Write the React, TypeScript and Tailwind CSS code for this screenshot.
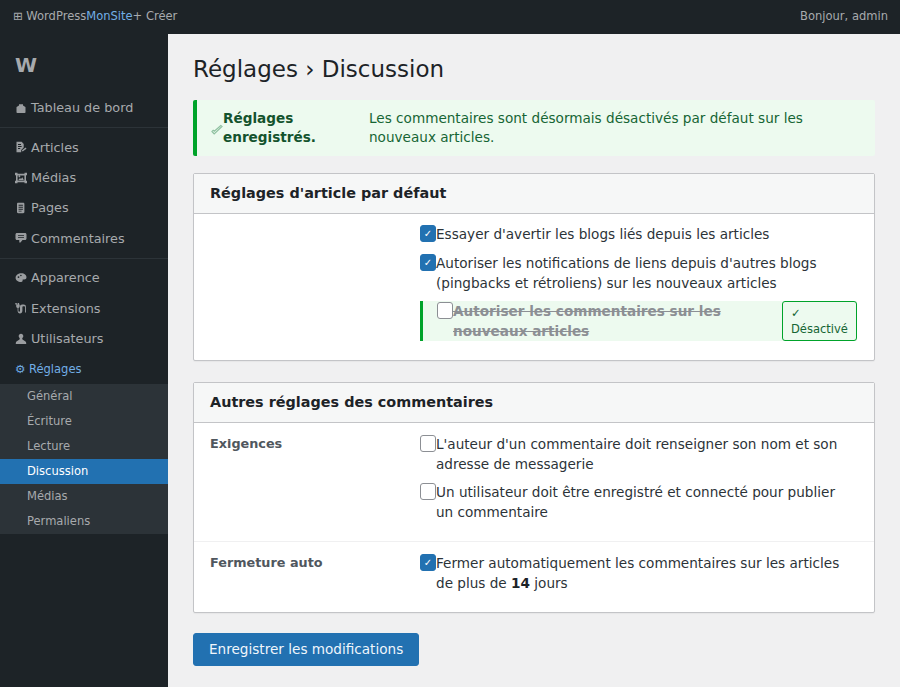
import React from 'react';

const font = { fontFamily: '"DejaVu Sans", sans-serif' };

// small filled glyphs for the side menu, 12x12 grid
const icons: Record<string, React.ReactNode> = {
  home: <path d="M4 2.200h4v1.300l2 1.200c.4.200.5.500.5.900v4.600c0 .5-.3.800-.8.800H2.300c-.5 0-.8-.3-.8-.8V5.600c0-.4.100-.7.500-.9l2-1.200z" />,
  post: (
    <>
      <path fillRule="evenodd" d="M1.500.8h5.200l2 2.200v3.400L6.200 9v2.200H1.500zM3 3v.9h3V3zm0 2v.9h3.600V5zm0 2v.9h2.200V7z" />
      <path d="M7 9.200l3.600-2.600.9 1.100L8 10.300H7z" />
    </>
  ),
  media: (
    <path
      fillRule="evenodd"
      d="M0 .8h2.500v1h7v-1H12v2.500h-1v5.400h1v2.500H9.500v-1h-7v1H0V8.700h1V3.300H0zm2.600 2.600v5.200h6.800V3.400zM3.300 8l1.700-2 1 1 1.300-1.800L8.800 8zM4.400 5.300a.9.9 0 1 0 0-1.800.9.9 0 0 0 0 1.800z"
    />
  ),
  page: (
    <path
      fillRule="evenodd"
      d="M3.200.8h5c.7 0 1.200.5 1.200 1.200v8c0 .7-.5 1.200-1.200 1.200h-5C2.500 11.200 2 10.700 2 10V2C2 1.300 2.500.8 3.200.8zM3.600 2.800v.9h4.300v-.9zm0 2v.9h4.300v-.9zm0 2v.9h4.300v-.9zm0 2v.7h3v-.7z"
    />
  ),
  comment: (
    <path
      fillRule="evenodd"
      d="M2 1h8c.9 0 1.500.6 1.500 1.500v4c0 .9-.6 1.500-1.500 1.500H7.500L5.500 10.500H4.300V8H2C1.100 8 .5 7.400.5 6.500v-4C.5 1.600 1.100 1 2 1zm1 2v.8h6V3zm0 2v.8h6V5z"
    />
  ),
  palette: (
    <path
      fillRule="evenodd"
      d="M6.500 1.200c2.800 0 5 1.700 5 4 0 1.500-1 2.200-2.300 2.200H8.300c-.6 0-.9.4-.7.9.3.7-.1 1.700-1.500 1.700C3 10 .6 8.300.6 5.700.6 3 3.200 1.200 6.500 1.200zM3.500 4.200a.9.9 0 1 0 0 1.800.9.9 0 0 0 0-1.800zm2.400-1.500a.8.8 0 1 0 0 1.600.8.8 0 0 0 0-1.600z"
    />
  ),
  plug: (
    <path d="M.3 1h1.500v1.500h.8V1h1.500v1.500h.6v1.800c0 1-.6 1.600-1.300 1.800v2.700c0 .6.300.9.800.9s.8-.3.800-.9V4.800c0-1.300.9-2.200 2.200-2.200h1.500c1.300 0 2.200.9 2.200 2.200v5.600H10V5c0-.5-.3-.8-.8-.8h-1c-.5 0-.8.3-.8.8v3.800c0 1.600-1 2.600-2.400 2.600S2.600 10.400 2.600 8.800V6.100C1.800 5.900 1.200 5.300 1.200 4.300V2.500H.3z" />
  ),
  user: (
    <path d="M6 .8c1.400 0 2.300 1 2.300 2.300 0 1-.5 1.700-1.100 2.100l.3 1.400 2.700 1.600c.7.400 1 1 1 1.800v1H.8v-1c0-.8.3-1.400 1-1.800l2.700-1.600.3-1.400C4.200 4.800 3.700 4.100 3.700 3.100 3.700 1.800 4.600.8 6 .8z" />
  ),
};

const MenuItem = ({ icon, label }: { icon: string; label: string }) => (
  <div className="flex items-center h-[30.4px] px-[15px] text-[12.8px] text-[#a7aaad]">
    <svg viewBox="0 0 12 12" className="w-3 h-3 mr-1 shrink-0 fill-[#9a9da0]">
      {icons[icon]}
    </svg>
    <span>{label}</span>
  </div>
);

const SubItem = ({ label, active }: { label: string; active?: boolean }) => (
  <div className={`h-[25px] flex items-center pl-[27px] text-[11.52px] ${active ? 'bg-[#2271b1] text-white' : 'text-[#a7aaad]'}`}>
    {label}
  </div>
);

const Check = ({ on }: { on?: boolean }) => (
  <span
    className={`shrink-0 w-[16px] h-[17px] mt-[1px] rounded-[3px] border flex items-center justify-center text-[10px] text-white ${
      on ? 'bg-[#2271b1] border-[#2271b1]' : 'bg-white border-[#8c8f94]'
    }`}
  >
    {on ? '✓' : ''}
  </span>
);

const Card = ({ title, children }: { title: string; children: React.ReactNode }) => (
  <section className="bg-white border border-[#c3c4c7] shadow-[0_1px_1px_rgba(0,0,0,0.04)] rounded-[2px]">
    <h2 className="h-[40px] flex items-center px-4 bg-[#f6f7f7] border-b border-[#c3c4c7] text-[14.4px] font-bold text-[#1d2327]">
      {title}
    </h2>
    {children}
  </section>
);

export default function App() {
  return (
    <div className="w-[900px] h-[687px] overflow-hidden flex flex-col bg-[#f0f0f1]" style={font}>
      {/* top bar */}
      <header className="h-[34px] shrink-0 bg-[#1d2327] flex items-center justify-between pl-[13px] pr-[12px] text-[11.52px] text-[#a7aaad]">
        <div>
          <span>⊞ WordPress</span>
          <span className="text-[#72aee6]">MonSite</span>
          <span>+ Créer</span>
        </div>
        <span>Bonjour, admin</span>
      </header>

      <div className="flex flex-1 min-h-0">
        {/* sidebar */}
        <aside className="w-[168px] shrink-0 bg-[#1d2327]">
          <div className="h-[58.7px] px-[15px] pt-[16px] text-[20px] font-bold text-[#a7aaad]">W</div>
          <MenuItem icon="home" label="Tableau de bord" />
          <div className="h-px bg-[#2c3338] mt-[4px] mb-[4px]" />
          <MenuItem icon="post" label="Articles" />
          <MenuItem icon="media" label="Médias" />
          <MenuItem icon="page" label="Pages" />
          <MenuItem icon="comment" label="Commentaires" />
          <div className="h-px bg-[#2c3338] mt-[4px] mb-[4px]" />
          <MenuItem icon="palette" label="Apparence" />
          <MenuItem icon="plug" label="Extensions" />
          <MenuItem icon="user" label="Utilisateurs" />
          <div className="flex items-center h-[30px] pt-[2px] px-[15px] text-[11.52px] text-[#72aee6]">⚙ Réglages</div>
          <div className="bg-[#2c3338]">
            <SubItem label="Général" />
            <SubItem label="Écriture" />
            <SubItem label="Lecture" />
            <SubItem label="Discussion" active />
            <SubItem label="Médias" />
            <SubItem label="Permaliens" />
          </div>
        </aside>

        {/* main */}
        <main className="flex-1 pl-[25px] pr-[25px] pt-[19px]">
          <h1 className="text-[23px] leading-[32px] font-normal text-[#1d2327] mb-[15px]">Réglages › Discussion</h1>

          <div className="flex h-[56px] items-center bg-[#edfaef] border-l-4 border-[#00a32a] rounded-[2px] pl-[14px] pr-4 text-[13.6px] leading-[19px] text-[#166534]">
            <svg viewBox="0 0 12 12" className="w-3 h-3 shrink-0 mt-[2px] fill-none stroke-[#8fc0a0] stroke-[1.2]">
              <path d="M1 8.500L3.200 11 11 3.500 9.800 2.500 3.300 8.300 2.200 7.300z" />
            </svg>
            <strong className="w-[146px] shrink-0 text-[#14532d]">Réglages enregistrés.</strong>
            <span>Les commentaires sont désormais désactivés par défaut sur les nouveaux articles.</span>
          </div>

          <div className="mt-[17px]">
            <Card title="Réglages d'article par défaut">
              <div className="pl-[226px] pr-[17px] pt-[10px] pb-[19px] text-[13.6px] leading-[20px] text-[#2c3338]">
                <label className="flex items-start">
                  <Check on />
                  <span>Essayer d'avertir les blogs liés depuis les articles</span>
                </label>
                <label className="flex items-start mt-[9px]">
                  <Check on />
                  <span>Autoriser les notifications de liens depuis d'autres blogs (pingbacks et rétroliens) sur les nouveaux articles</span>
                </label>
                <div className="flex items-center justify-between mt-[8px] h-[40px] bg-[#edfaef] border-l-[3px] border-[#00a32a] pl-[14px]">
                  <label className="flex items-start w-[330px] self-start">
                    <Check />
                    <span className="line-through font-bold text-[#8c8f94]">Autoriser les commentaires sur les nouveaux articles</span>
                  </label>
                  <span className="w-[75px] h-[40px] shrink-0 border border-[#00a32a] rounded-[3px] bg-[#edfaef] px-2 pt-[3px] text-[11.52px] leading-[16px] text-[#166534]">
                    ✓ Désactivé
                  </span>
                </div>
              </div>
            </Card>
          </div>

          <div className="mt-[21px]">
            <Card title="Autres réglages des commentaires">
              <div className="flex pl-4 pr-[18px] pt-[11px] pb-[19px] border-b border-[#f0f0f1] text-[13.6px] leading-[20px] text-[#2c3338]">
                <div className="w-[210px] shrink-0 font-bold text-[12.8px] text-[#50575e]">Exigences</div>
                <div>
                  <label className="flex items-start">
                    <Check />
                    <span>L'auteur d'un commentaire doit renseigner son nom et son adresse de messagerie</span>
                  </label>
                  <label className="flex items-start mt-[8px]">
                    <Check />
                    <span>Un utilisateur doit être enregistré et connecté pour publier un commentaire</span>
                  </label>
                </div>
              </div>
              <div className="flex pl-4 pr-[18px] pt-[11px] pb-[19px] text-[13.6px] leading-[20px] text-[#2c3338]">
                <div className="w-[210px] shrink-0 font-bold text-[12.8px] text-[#50575e]">Fermeture auto</div>
                <label className="flex items-start">
                  <Check on />
                  <span>Fermer automatiquement les commentaires sur les articles de plus de <strong className="font-bold text-[#1d2327]">14</strong> jours</span>
                </label>
              </div>
            </Card>
          </div>

          <button className="mt-[20px] h-[33px] w-[226px] pl-[15px] text-left bg-[#2271b1] border border-[#2271b1] rounded-[3px] text-[13.6px] text-[#f0f6fc]">
            Enregistrer les modifications
          </button>
        </main>
      </div>
    </div>
  );
}
